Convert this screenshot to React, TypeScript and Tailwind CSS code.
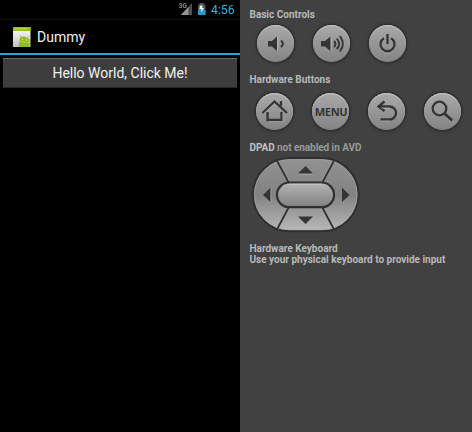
import type { ReactNode } from "react";

function RoundKey({ label, children }: { label: string; children: ReactNode }) {
  return (
    <button
      aria-label={label}
      className="h-[37px] w-[37px] shrink-0 rounded-full bg-linear-to-b from-[#a9a9a9] to-[#848484] shadow-[0_0_0_1px_#303030,0_0_3px_1px_#292929,inset_0_1px_1px_#c4c4c4]"
    >
      <svg viewBox="0 0 37 37" className="block h-full w-full overflow-visible" fill="none" stroke="#343434" strokeWidth="2">
        {children}
      </svg>
    </button>
  );
}

function StatusBar() {
  return (
    <div className="flex h-5 items-start border-b border-[#111] text-[#33b5e5]">
      <svg className="ml-[178px] h-5 w-[62px] will-change-transform" viewBox="0 0 62 20">
        <path d="M14 3V15H3Z" fill="#505050" />
        <path d="M10.5 6.8V15H3Z" fill="#969696" />
        <text x=".8" y="8" fontSize="6.5" fontWeight="700" fill="#8b8b8b" className="font-[Roboto,sans-serif]">3G</text>
        <path d="M21.5 3H26V4.5H27.5V15H20V4.5H21.5Z" fill="#4d575a" />
        <path d="M20 10H27.5V15H20Z" fill="#279ac4" />
        <path d="M22 5.5 21.3 9.5 23.4 9 23 12.6 26.3 7.7 24 8 24.6 5.5Z" fill="#eef8fa" />
        <text x="33" y="14" fontSize="12.2" fill="#33b5e5" className="font-[Roboto,sans-serif]">4:56</text>
      </svg>
    </div>
  );
}

function AppIcon() {
  return (
    <svg className="h-5 w-[18px]" viewBox="0 0 18 20">
      <defs>
        <linearGradient id="paper" x2="0" y2="1">
          <stop stopColor="#fff" />
          <stop offset="1" stopColor="#bfc3bc" />
        </linearGradient>
      </defs>
      <path d="M0 0H17.5V20H0Z" fill="url(#paper)" />
      <path d="M0 0H17.5V4H0Z" fill="#91bf20" />
      <path d="M2 1.7H14" stroke="#c8df8e" strokeDasharray="1.5 .6" />
      <g fill="#8fbd22">
        <path d="M6.3 14.6 6.8 11.5C8 9.5 10 9.2 12 9.8L16.5 12.5V20H5.8V17.5Z" />
        <path d="m9 11-2-2.7M13.8 11.5l1.8-2.3" stroke="#8fbd22" strokeWidth=".8" />
      </g>
      <path d="M6.3 14.2 16.5 15.5" stroke="#dde5c8" strokeWidth=".5" />
      <path d="M9 12.2H10M13 12.9H14" stroke="#eef3df" strokeWidth=".8" />
    </svg>
  );
}

function DPad() {
  return (
    <svg className="mt-[3px] ml-[1.5px] block h-[78px] w-[110px]" viewBox="251 156 110 78">
      <defs>
        <linearGradient id="pad" x2="0" y2="1">
          <stop stopColor="#929292" />
          <stop offset=".5" stopColor="#828282" />
          <stop offset="1" stopColor="#b9b9b9" />
        </linearGradient>
        <linearGradient id="key" x2="0" y2="1">
          <stop stopColor="#b5b5b5" />
          <stop offset="1" stopColor="#818181" />
        </linearGradient>
      </defs>
      <rect x="253" y="158.2" width="105.5" height="73" rx="36.5" fill="url(#pad)" stroke="#303030" strokeWidth="2.2" />
      <rect x="254.4" y="159.6" width="102.7" height="70.2" rx="35.1" fill="none" stroke="#aaa" strokeWidth=".7" />
      <path d="M277 160.5 288.5 182M334 160.5 322.5 182M277 229.5 288.5 208M334 229.5 322.5 208" stroke="#303030" strokeWidth="1.9" />
      <path d="M278.5 160.5 289.5 181M332.5 160.5 321.5 181M278.5 229.5 289.5 209M332.5 229.5 321.5 209" stroke="#aaa" strokeWidth=".6" />
      <rect x="277" y="182.5" width="57" height="24.7" rx="12.3" fill="url(#key)" stroke="#303030" strokeWidth="2.2" />
      <path d="M289 184.2H322" stroke="#d1d1d1" strokeWidth=".8" />
      <path d="M298 173.5 305.5 166 313 173.5ZM298 216.5H313L305.5 224ZM270.5 187.5V202L263 195ZM342 187.5V202L349.5 195Z" fill="#353535" />
      <path d="M299 174.3H313M306 224.6 314 217M271 188V202" stroke="#b0b0b0" strokeWidth=".6" />
    </svg>
  );
}

function Phone() {
  return (
    <section className="w-60 bg-black text-[#f1f1f1]">
      <StatusBar />
      <header className="flex h-[35px] items-center border-b-2 border-[#2fa6d2] pl-[13px]">
        <AppIcon />
        <h1 className="ml-[6px] text-[14px] leading-4">Dummy</h1>
      </header>
      <button className="mt-[3px] ml-[3px] flex h-[30px] w-[234px] items-center justify-center border-t border-b border-t-[#676767] border-b-[#282828] bg-[#3d3d3d] text-[14px] leading-4">
        Hello World, Click Me!
      </button>
    </section>
  );
}

function Controls() {
  return (
    <aside className="w-[232px] bg-[#414141] pt-[9px] pl-[9.5px] text-[10px] leading-[11px] font-bold text-[#b9b9b9]">
      <h2>Basic Controls</h2>
      <div className="mt-[5px] ml-[7px] flex gap-[19px]">
        <RoundKey label="Volume down">
          <path d="M11 16H15L20 11.5V26L15 21.5H11Z" fill="#343434" stroke="none" />
          <path d="M20.8 12V26" stroke="#c2c2c2" strokeWidth=".8" />
          <path d="M24 15.5Q27.8 18.5 24 22" />
        </RoundKey>
        <RoundKey label="Volume up">
          <path d="M8 16H12L17.5 11.5V26L12 21.5H8Z" fill="#343434" stroke="none" />
          <path d="M18.2 12V26" stroke="#bdbdbd" strokeWidth=".7" />
          <path d="M21 16Q24 19 21 22M23.8 13.5Q28.5 19 23.8 24M26.8 11Q33 19 26.8 26.5" strokeWidth="1.9" />
        </RoundKey>
        <RoundKey label="Power">
          <path d="M15.5 13.2A7 7 0 1 0 21.5 13.2" stroke="#b2b2b2" strokeWidth=".8" transform="translate(0 1.7)" />
          <path d="M15 13.2A7 7 0 1 0 22 13.2M18.5 9V19" strokeWidth="2.3" />
        </RoundKey>
      </div>
      <h2 className="mt-3">Hardware Buttons</h2>
      <div className="mt-2 ml-[6px] flex gap-[19px]">
        <RoundKey label="Home">
          <path d="m6.5 20 12-11.5L31 20M25 13V8M11.5 19v8h14v-8" strokeWidth="2.3" />
          <path d="M12 28.7H27.2V20M8 20.5 18.5 10.7" stroke="#b7b7b7" strokeWidth=".6" />
        </RoundKey>
        <RoundKey label="Menu">
          <text x="19" y="23" textAnchor="middle" fill="#343434" stroke="none" fontSize="11" fontWeight="700" className="font-['Open_Sans',sans-serif] tracking-[-.3px]">MENU</text>
        </RoundKey>
        <RoundKey label="Back">
          <path d="M16.5 8.5 10.5 13.5 16.5 18M10.5 13.5H21.5A6.3 6.3 0 0 1 21.5 26.5H12.5" strokeWidth="2.3" />
          <path d="M13 28H22M13 15H21" stroke="#b9b9b9" strokeWidth=".6" />
        </RoundKey>
        <RoundKey label="Search">
          <circle cx="15.5" cy="15.5" r="6.8" strokeWidth="2.3" />
          <path d="m20.5 20.5 7.5 7" strokeWidth="3" />
          <path d="M22 24l5 5" stroke="#b6b6b6" strokeWidth=".6" />
        </RoundKey>
      </div>
      <h2 className="mt-3 tracking-[-.06px] text-[#999]"><span className="text-[#c0c0c0]">DPAD</span> not enabled in AVD</h2>
      <DPad />
      <div className="mt-[9px]">
        <h2>Hardware Keyboard</h2>
        <p>Use your physical keyboard to provide input</p>
      </div>
    </aside>
  );
}

export default function App() {
  return (
    <main className="flex h-[432px] w-[472px] overflow-hidden font-[Roboto,sans-serif] antialiased">
      <Phone />
      <Controls />
    </main>
  );
}
